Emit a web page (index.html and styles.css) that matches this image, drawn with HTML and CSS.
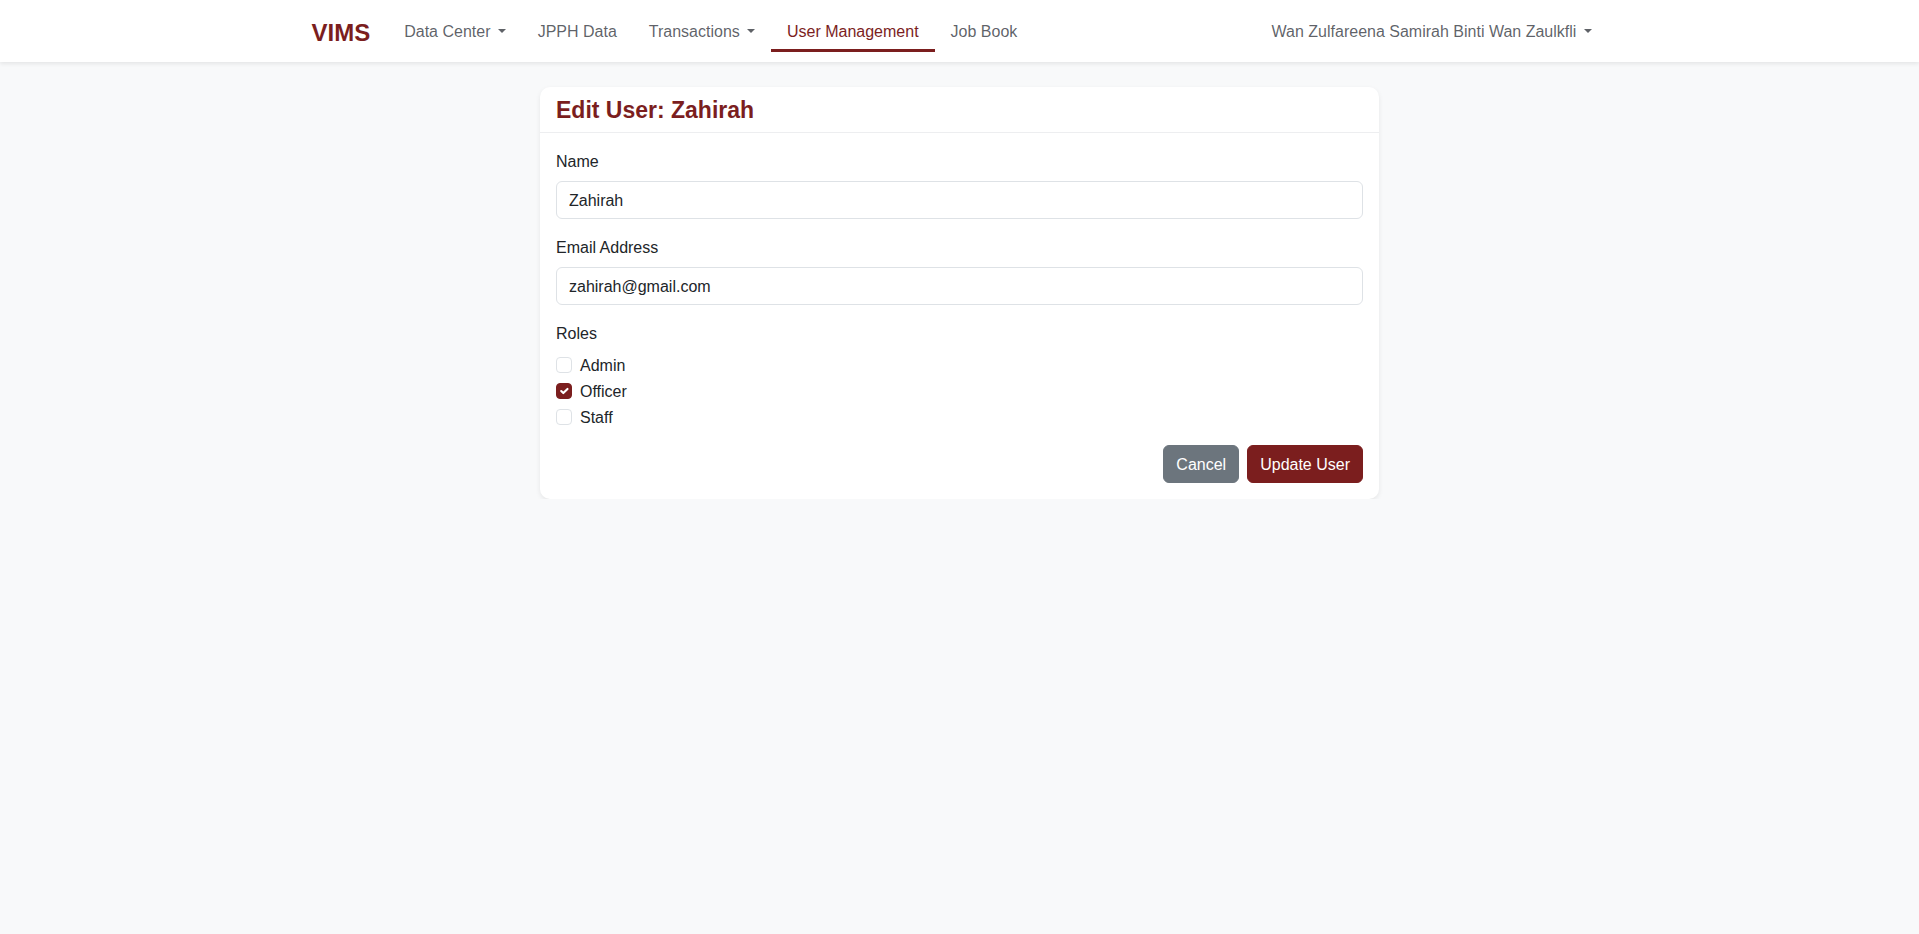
FILE: index.html
```html
<!DOCTYPE html>
<html lang="en">
<head>
    <meta charset="UTF-8">
    <meta name="viewport" content="width=device-width, initial-scale=1.0">
    <title>Edit User - VIMS</title>
    <link rel="stylesheet" href="styles.css">
</head>
<body>

<nav class="navbar">
    <div class="container nav-inner">
        <a class="brand" href="#">VIMS</a>
        <ul class="nav-links">
            <li><a class="nav-link dropdown-toggle" href="#">Data Center</a></li>
            <li><a class="nav-link" href="#">JPPH Data</a></li>
            <li><a class="nav-link dropdown-toggle" href="#">Transactions</a></li>
            <li><a class="nav-link active" href="#">User Management</a></li>
            <li><a class="nav-link" href="#">Job Book</a></li>
        </ul>
        <ul class="nav-links nav-user">
            <!-- logged in user -->
            <li><a class="nav-link dropdown-toggle" href="#">Wan Zulfareena Samirah Binti Wan Zaulkfli</a></li>
        </ul>
    </div>
</nav>

<main class="page">
    <div class="card">
        <div class="card-header">
            <h4 class="card-title">Edit User: Zahirah</h4>
        </div>
        <div class="card-body">
            <form>
                <div class="field">
                    <label class="form-label" for="name">Name</label>
                    <input type="text" class="form-control" id="name" value="Zahirah">
                </div>

                <div class="field">
                    <label class="form-label" for="email">Email Address</label>
                    <input type="email" class="form-control" id="email" value="zahirah@gmail.com">
                </div>

                <div class="field">
                    <div class="form-label">Roles</div>
                    <div class="form-check">
                        <input type="checkbox" class="form-check-input" id="role-admin">
                        <label for="role-admin">Admin</label>
                    </div>
                    <div class="form-check">
                        <input type="checkbox" class="form-check-input" id="role-officer" checked>
                        <label for="role-officer">Officer</label>
                    </div>
                    <div class="form-check">
                        <input type="checkbox" class="form-check-input" id="role-staff">
                        <label for="role-staff">Staff</label>
                    </div>
                </div>

                <div class="actions">
                    <a href="#" class="btn btn-secondary">Cancel</a>
                    <button type="button" class="btn btn-primary">Update User</button>
                </div>
            </form>
        </div>
    </div>
</main>

</body>
</html>
```

FILE: styles.css
```css
* {
    box-sizing: border-box;
}

body {
    font-family: "Liberation Sans", Arial, sans-serif;
    font-size: 16px;
    line-height: 1.5;
    color: #212529;
    margin: 0;
    padding: 0;
    background-color: #f8f9fa;
}

a {
    text-decoration: none;
}

.container {
    max-width: 1320px;
    margin: 0 auto;
    padding: 0 12px;
}

/* Navbar */
.navbar {
    background: white;
    height: 62px;
    box-shadow: 0 2px 4px rgba(0, 0, 0, 0.08);
}

.nav-inner {
    display: flex;
    align-items: flex-start;
    height: 100%;
    padding-top: 7px;
}

.brand {
    color: #7b1e1e;
    font-size: 24px;
    font-weight: bold;
    line-height: 1.2;
    margin-top: 12px;
    margin-right: 18px;
}

.nav-links {
    display: flex;
    list-style: none;
    margin: 0;
    padding: 0;
}

.nav-user {
    margin-left: auto;
}

.nav-link {
    display: block;
    padding: 13px 16px 5px;
    color: rgba(33, 37, 45, 0.72);
    border-bottom: 3px solid transparent;
}

.nav-link.active {
    color: #7b1e1e;
    border-bottom-color: #7b1e1e;
}

.dropdown-toggle::after {
    content: "";
    display: inline-block;
    margin-left: 0.45em;
    vertical-align: 0.255em;
    border-top: 0.3em solid;
    border-right: 0.3em solid transparent;
    border-left: 0.3em solid transparent;
}

/* Card */
.page {
    padding-top: 25px;
}

.card {
    width: 839px;
    margin: 0 auto;
    background: white;
    border-radius: 10px;
    box-shadow: 0 2px 5px rgba(0, 0, 0, 0.08);
}

.card-header {
    padding: 8px 16px;
    border-bottom: 1px solid #edeef0;
}

.card-title {
    margin: 0;
    padding-top: 1px;
    color: #7b1e1e;
    font-size: 23px;
    font-weight: bold;
    line-height: 28px;
}

.card-body {
    padding: 16px;
}

form {
    margin: 0;
}

.field {
    margin-bottom: 16px;
}

.form-label {
    display: inline-block;
    position: relative;
    top: 1px;
    margin-bottom: 8px;
}

.form-control {
    display: block;
    width: 100%;
    padding: 7px 12px 5px;
    font-family: inherit;
    font-size: 16px;
    line-height: 1.5;
    color: #212529;
    background: white;
    border: 1px solid #dee2e6;
    border-radius: 6px;
}

/* Checkboxes */
.form-check {
    display: block;
    min-height: 24px;
    padding-left: 24px;
    margin-bottom: 2px;
}

.form-check label {
    position: relative;
    top: 1px;
}

.form-check-input {
    appearance: none;
    float: left;
    width: 16px;
    height: 16px;
    margin: 4px 0 0 -24px;
    border: 1px solid #dee2e6;
    border-radius: 4px;
    background-color: white;
    background-repeat: no-repeat;
    background-position: center;
    background-size: contain;
}

.form-check-input:checked {
    background-color: #7b1e1e;
    border-color: #7b1e1e;
    background-image: url("data:image/svg+xml,%3csvg xmlns='http://www.w3.org/2000/svg' viewBox='0 0 20 20'%3e%3cpath fill='none' stroke='%23fff' stroke-linecap='round' stroke-linejoin='round' stroke-width='3' d='m6 10 3 3 6-6'/%3e%3c/svg%3e");
}

/* Buttons */
.actions {
    display: flex;
    justify-content: flex-end;
    gap: 8px;
}

.btn {
    display: inline-block;
    padding: 7px 12px 5px;
    font-family: inherit;
    font-size: 16px;
    line-height: 1.5;
    color: white;
    border: 1px solid transparent;
    border-radius: 6px;
    cursor: pointer;
}

.btn-secondary {
    background: #6c757d;
    border-color: #6c757d;
}

.btn-primary {
    background: #7b1e1e;
    border-color: #7b1e1e;
}
```
